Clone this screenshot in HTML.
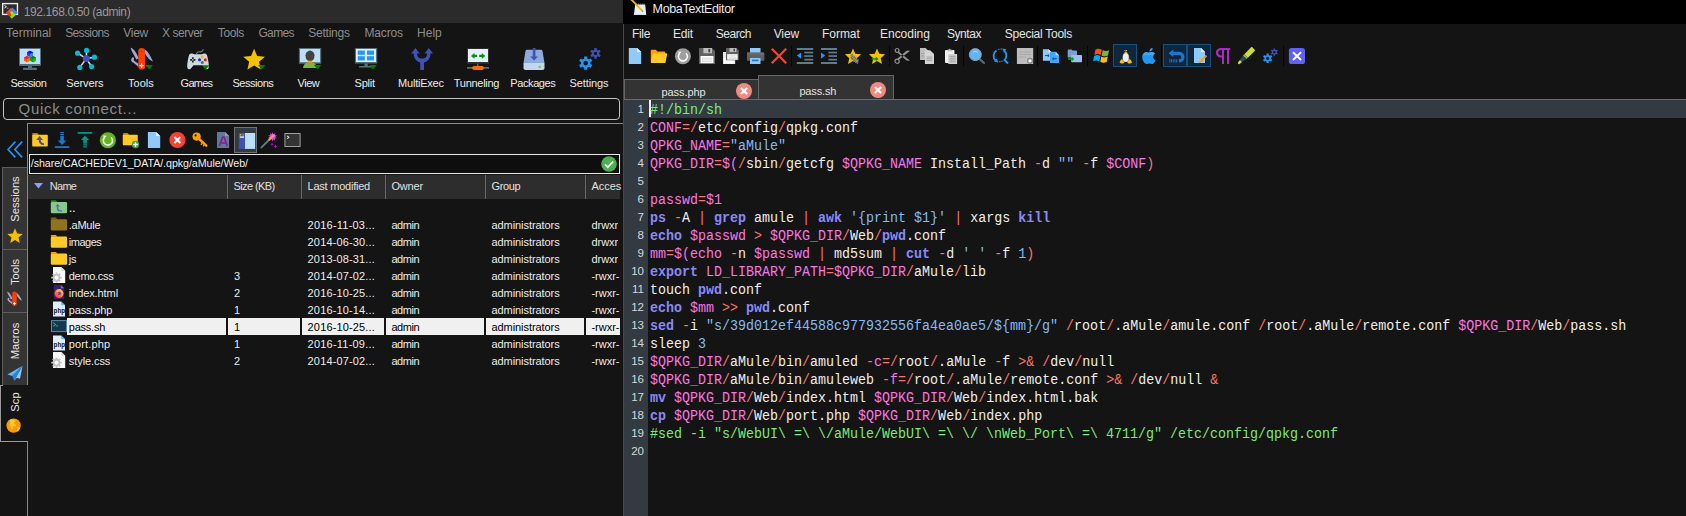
<!DOCTYPE html>
<html><head><meta charset="utf-8"><title>MobaXterm</title><style>
html,body{margin:0;padding:0;background:#141414;}
body{width:1686px;height:516px;position:relative;overflow:hidden;font-family:"Liberation Sans",sans-serif;}
body>div,body>svg{position:absolute;}
.t{white-space:pre;}
.vt{white-space:pre;font-size:11.2px;line-height:14px;height:14px;width:80px;text-align:center;transform:rotate(-90deg);transform-origin:50% 50%;}
.cl{left:650.4px;height:18px;line-height:18px;white-space:pre;font-family:"Liberation Mono",monospace;font-size:14px;transform:scaleX(0.95238);transform-origin:0 0;color:#e8e8e8;}
.p{color:#f878e4}.o{color:#f8766a}.k{color:#8a8af6;font-weight:bold}.s{color:#84bbf6}.w{color:#efefef}.g{color:#7aea7a}
</style></head><body>
<div style="left:0px;top:0px;width:623px;height:23px;background:#2b2b2b;"></div>
<div style="left:623px;top:24px;width:1px;height:492px;background:#484848;"></div>
<svg style="left:2px;top:3px" width="18" height="18" viewBox="0 0 18 18" overflow="visible"><rect x="0.65" y="0.6" width="14.8" height="10.8" fill="#2b2b2b" stroke="#ececec" stroke-width="1.4"/>
<path d="M2.4 2.4l2 1.3-2 1.3" fill="none" stroke="#fff" stroke-width="0.9"/><path d="M4.8 5.2h1.6" stroke="#ddd" stroke-width="0.7"/>
<g transform="translate(9.85 9.8) rotate(45)">
<rect x="-3.4" y="-4.2" width="7.6" height="2.8" fill="#3f86f8"/>
<rect x="-4.2" y="-2.6" width="2.8" height="6.8" fill="#f04a4a"/><rect x="-4.2" y="1.4" width="5.6" height="2.8" fill="#e53935"/>
<rect x="-1.4" y="-1.4" width="5.6" height="2.8" fill="#a2ec00"/><rect x="1.4" y="-1.4" width="2.8" height="5.6" fill="#8fdc00"/>
</g></svg>
<svg style="left:16px;top:47px" width="24" height="24" viewBox="0 0 24 24" overflow="visible"><rect x="3" y="0.9" width="22" height="18" rx="0.8" fill="#546e7a"/>
<rect x="4" y="2" width="20" height="15" fill="#bbdefb"/>
<rect x="12" y="19" width="4" height="2.2" fill="#546e7a"/><rect x="7" y="20.8" width="14" height="2.2" rx="0.8" fill="#546e7a"/>
<g transform="translate(2 0)"><path d="M12 3.8l3 1.5v3.2l-3 1.6-3-1.6V5.3z" fill="#1a47f0"/><path d="M12 6.8l3-1.5v3.2l-3 1.6z" fill="#3d7bff"/><path d="M12 3.8l3 1.5-3 1.5-3-1.5z" fill="#0a0af0"/>
<path d="M9 9l3 1.5v3.2l-3 1.6-3-1.6v-3.2z" fill="#f4511e"/><path d="M9 9l3 1.5-3 1.4-3-1.4z" fill="#ff1a1a"/><path d="M9 11.9l3-1.4v3.2l-3 1.6z" fill="#ff7a00"/>
<path d="M15 9l3 1.5v3.2l-3 1.6-3-1.6v-3.2z" fill="#0a9d12"/><path d="M15 9l3 1.5-3 1.4-3-1.4z" fill="#087f10"/><path d="M15 11.9l3-1.4v3.2l-3 1.6z" fill="#10c020"/></g></svg>
<svg style="left:73px;top:47px" width="24" height="24" viewBox="0 0 24 24" overflow="visible"><g stroke="#e0e0e0" stroke-width="1.5"><path d="M13.3 11.6L13.6 3.4M13.3 11.6L4.6 6.2M13.3 11.6L21.4 10.2M13.3 11.6L6.8 20.4M13.3 11.6L18.6 19.5"/></g>
<g fill="#00bcd4"><circle cx="13.6" cy="3.4" r="2.6"/><circle cx="4.6" cy="6.2" r="2.6"/><circle cx="21.4" cy="10.2" r="2.6"/><circle cx="6.8" cy="20.4" r="2.6"/><circle cx="18.6" cy="19.5" r="2.6"/></g>
<circle cx="13.3" cy="11.6" r="3.5" fill="#3f51b5"/></svg>
<svg style="left:129px;top:47px" width="24" height="24" viewBox="0 0 24 24" overflow="visible"><path d="M1.6 0.8c2.8 0.6 5.4 4.2 8.2 10.4l-2.4 1.4C5.2 8.4 2.6 4.8 1.6 0.8z" fill="#9fa8da"/>
<path d="M16 2.6c3 2.2 5.6 6.8 8 11.8-3-0.4-6.6-4.8-8.8-9.6z" fill="#9fa8da"/>
<path d="M3.4 10.2c-2 2.2-1.4 4.4 0.8 5.4l5.2 4.2-0.2-3.2-3.4-2.4c-1.2-0.8-1.4-2-0.6-3.4z" fill="#9fa8da"/>
<rect x="9.3" y="0.9" width="6.8" height="21.7" rx="3.4" fill="#ff3d00"/>
<circle cx="12.7" cy="4.6" r="0.9" fill="#dd2c00"/>
<path d="M12.6 16.6v4.2M10.5 18.7h4.2" stroke="#fff" stroke-width="1.3"/>
<path d="M16.4 18h7.5l-3.75 4.6z" fill="#008000"/></svg>
<svg style="left:186px;top:47px" width="24" height="24" viewBox="0 0 24 24" overflow="visible"><path d="M10.5 7.2c0.3-2 1.2-2.6 2.8-2.4 2 0.3 3.5-0.3 4-2.6" fill="none" stroke="#607d8b" stroke-width="1.1"/>
<path d="M5.5 6.6c-2 0-2.6 1.4-3.2 4.4-0.8 4-1.6 8-0.8 10.2 0.6 1.5 2.2 1.5 3.4 0.2l2.6-3.2h9l2.6 3.2c1.2 1.3 2.8 1.3 3.4-0.2 0.8-2.2 0-6.2-0.8-10.2-0.6-3-1.2-4.4-3.2-4.4-1.2 0-1.6 0.6-2.6 0.6h-7.8c-1 0-1.4-0.6-2.6-0.6z" fill="#cfd8dc"/>
<path d="M6.8 10.2v5.2M4.2 12.8h5.2" stroke="#212121" stroke-width="1.7"/>
<rect x="6.1" y="12.1" width="1.4" height="1.4" fill="#cfd8dc"/>
<circle cx="16.2" cy="9.8" r="1.5" fill="#f2b600"/><circle cx="13.5" cy="12.8" r="1.5" fill="#0026ff"/><circle cx="19.3" cy="12.8" r="1.5" fill="#ff0d0d"/><circle cx="16.3" cy="15.4" r="1.5" fill="#0a9d12"/>
<path d="M16 18.3h7.4l-3.7 4.5z" fill="#008000"/></svg>
<svg style="left:242px;top:47px" width="24" height="24" viewBox="0 0 24 24" overflow="visible"><polygon points="12.10,1.80 15.16,8.99 22.94,9.68 17.05,14.81 18.80,22.42 12.10,18.40 5.40,22.42 7.15,14.81 1.26,9.68 9.04,8.99" fill="#f2c100"/><path d="M16 18h7.4l-3.7 4.5z" fill="#008000"/></svg>
<svg style="left:296px;top:47px" width="24" height="24" viewBox="0 0 24 24" overflow="visible"><rect x="2.9" y="0.9" width="22.3" height="15.8" rx="0.6" fill="#546e7a" transform="translate(0 0)"/>
<rect x="4" y="2" width="20" height="13.2" fill="#bbdefb"/>
<ellipse cx="14" cy="9" rx="4.6" ry="5.4" fill="#424242"/>
<rect x="9.1" y="9.2" width="0.8" height="1.6" fill="#ffb74d"/><rect x="18.1" y="9.2" width="0.8" height="1.6" fill="#ffb74d"/>
<rect x="12" y="13.6" width="4" height="2.4" fill="#ff9800"/>
<path d="M7 21c0.4-3.6 2.4-5.2 5-5.6 1.2 1 2.8 1 4 0 2.6 0.4 4.6 2 5 5.6z" fill="#7cb342"/>
<path d="M17.8 18h7.4l-3.7 4.5z" fill="#008000"/></svg>
<svg style="left:353px;top:47px" width="24" height="24" viewBox="0 0 24 24" overflow="visible"><rect x="1.9" y="0.9" width="22.3" height="15.6" rx="0.6" fill="#546e7a"/>
<rect x="3" y="2" width="20" height="13" fill="#dcebf7"/>
<g fill="#2196f3"><rect x="4.8" y="3.6" width="7" height="4.2"/><rect x="14" y="3.6" width="7" height="4.2"/><rect x="4.8" y="9.2" width="7" height="4.2"/><rect x="14" y="9.2" width="7" height="4.2"/></g>
<rect x="11.4" y="16.5" width="3.4" height="2.6" fill="#546e7a"/><rect x="6" y="19" width="13" height="1.6" rx="0.6" fill="#546e7a"/>
<path d="M16.2 18h7.6l-3.8 4.6z" fill="#008000"/></svg>
<svg style="left:409px;top:47px" width="24" height="24" viewBox="0 0 24 24" overflow="visible"><path d="M11.2 23V15.4C7 14.4 4.75 11 4.75 6.5H2.1L6.4 0.9l4.3 5.6H8.05c0 3 1.75 5.1 5.05 5.1s5.05-2.1 5.05-5.1H15.5l4.3-5.6 4.3 5.6h-2.65c0 4.5-2.25 7.9-6.45 8.9V23z" fill="#3f51b5"/></svg>
<svg style="left:464px;top:47px" width="24" height="24" viewBox="0 0 24 24" overflow="visible"><rect x="3" y="1.2" width="22" height="15.5" fill="#333"/>
<rect x="4" y="2" width="20" height="13" fill="#e3f2fd"/>
<path d="M6.9 8.9l3.6-2.8v1.7h2.6v2.2h-2.6v1.7zM21.4 8.9l-3.6-2.8v1.7h-2.6v2.2h2.6v1.7z" fill="#009900"/>
<rect x="12.9" y="16.7" width="1.6" height="2.4" fill="#546e7a"/>
<rect x="3" y="20" width="22" height="1.7" fill="#546e7a"/>
<rect x="8.3" y="18.9" width="11.5" height="4" rx="1.6" fill="#ff6d00"/></svg>
<svg style="left:522px;top:47px" width="24" height="24" viewBox="0 0 24 24" overflow="visible"><path d="M5 2.8h14c0.8 0 1.3 0.4 1.5 1.2l2 12H1.5l2-12c0.2-0.8 0.7-1.2 1.5-1.2z" fill="#8eaadb"/>
<path d="M1.5 16h21v5c0 1.2-0.8 2-2 2h-17c-1.2 0-2-0.8-2-2z" fill="#c5d5f0"/>
<rect x="16.6" y="18.8" width="2.2" height="2.2" rx="0.5" fill="#64dd17"/>
<path d="M10.8 0.9h2.6v8.6h2.6l-3.9 3.9-3.9-3.9h2.6z" fill="#3f51b5"/></svg>
<svg style="left:576px;top:47px" width="24" height="24" viewBox="0 0 24 24" overflow="visible"><path d="M8.12 9.38 L11.28 9.38 L11.18 11.53 L12.91 12.53 L14.73 11.38 L16.31 14.11 L14.40 15.10 L14.40 17.10 L16.31 18.09 L14.73 20.82 L12.91 19.67 L11.18 20.67 L11.28 22.82 L8.12 22.82 L8.22 20.67 L6.49 19.67 L4.67 20.82 L3.09 18.09 L5.00 17.10 L5.00 15.10 L3.09 14.11 L4.67 11.38 L6.49 12.53 L8.22 11.53Z M7.40 16.10 a2.3 2.3 0 1 0 4.6 0 a2.3 2.3 0 1 0 -4.6 0Z" fill="#2196f3" fill-rule="evenodd"/><path d="M18.24 1.05 L20.76 1.05 L20.67 2.79 L22.04 3.58 L23.51 2.63 L24.77 4.81 L23.22 5.61 L23.22 7.19 L24.77 7.99 L23.51 10.17 L22.04 9.22 L20.67 10.01 L20.76 11.75 L18.24 11.75 L18.33 10.01 L16.96 9.22 L15.49 10.17 L14.23 7.99 L15.78 7.19 L15.78 5.61 L14.23 4.81 L15.49 2.63 L16.96 3.58 L18.33 2.79Z M17.80 6.40 a1.7 1.7 0 1 0 3.4 0 a1.7 1.7 0 1 0 -3.4 0Z" fill="#3f51b5" fill-rule="evenodd"/></svg>
<div style="left:3px;top:98px;width:617px;height:22px;border:1px solid #c4c4c4;border-radius:4px;box-sizing:border-box;"></div>
<svg style="left:7px;top:141px" width="16" height="17" viewBox="0 0 16 17" overflow="visible"><path d="M8.4 0.6L1 8.5l7.4 7.9M15.2 0.6L7.8 8.5l7.4 7.9" fill="none" stroke="#2196f3" stroke-width="1.6"/></svg>
<div style="left:27px;top:123px;width:596px;height:1px;background:#8a8a8a;"></div>
<div style="left:27px;top:123px;width:1px;height:393px;background:#8a8a8a;"></div>
<div style="left:2px;top:167px;width:25px;height:83px;background:#343434;border:1px solid #5e5e5e;border-right:none;box-sizing:border-box;"></div>
<div style="left:2px;top:249px;width:25px;height:64px;background:#343434;border:1px solid #5e5e5e;border-right:none;box-sizing:border-box;"></div>
<div style="left:2px;top:312px;width:25px;height:74px;background:#343434;border:1px solid #5e5e5e;border-right:none;box-sizing:border-box;"></div>
<div style="left:0px;top:385px;width:28px;height:57px;background:#141414;border-left:1px solid #9a9a9a;border-bottom:1px solid #9a9a9a;box-sizing:border-box;"></div>
<div style="left:0px;top:385px;width:3px;height:1px;background:#9a9a9a;"></div>
<div class="vt" style="left:-25px;top:192.2px;color:#e6e6e6">Sessions</div>
<div class="vt" style="left:-25px;top:264.7px;color:#e6e6e6">Tools</div>
<div class="vt" style="left:-25px;top:333.5px;color:#e6e6e6">Macros</div>
<div class="vt" style="left:-25px;top:394.5px;color:#e6e6e6">Scp</div>
<svg style="left:7px;top:227.6px" width="16" height="16" viewBox="0 0 16 16" overflow="visible"><polygon points="8.00,0.30 10.17,5.41 15.70,5.90 11.52,9.54 12.76,14.95 8.00,12.10 3.24,14.95 4.48,9.54 0.30,5.90 5.83,5.41" fill="#f2c100"/></svg>
<svg style="left:6px;top:291px" width="16" height="16" viewBox="0 0 24 24" overflow="visible"><path d="M1.6 0.8c2.8 0.6 5.4 4.2 8.2 10.4l-2.4 1.4C5.2 8.4 2.6 4.8 1.6 0.8z" fill="#9fa8da"/>
<path d="M16 2.6c3 2.2 5.6 6.8 8 11.8-3-0.4-6.6-4.8-8.8-9.6z" fill="#9fa8da"/>
<path d="M3.4 10.2c-2 2.2-1.4 4.4 0.8 5.4l5.2 4.2-0.2-3.2-3.4-2.4c-1.2-0.8-1.4-2-0.6-3.4z" fill="#9fa8da"/>
<rect x="9.3" y="0.9" width="6.8" height="21.7" rx="3.4" fill="#ff3d00"/>
<circle cx="12.7" cy="4.6" r="0.9" fill="#dd2c00"/>
<path d="M12.6 16.6v4.2M10.5 18.7h4.2" stroke="#fff" stroke-width="1.3"/></svg>
<svg style="left:7px;top:364.6px" width="16" height="16.6" viewBox="0 0 16 16" overflow="visible"><path d="M15.6 0.4L0.4 9.2l5 1.5z" fill="#64b5f6"/><path d="M15.6 0.4L5.4 10.7l1.8 5z" fill="#1e88e5"/><path d="M15.6 0.4L7.2 15.7l2.6-3.2 3.2 1z" fill="#90caf9"/></svg>
<svg style="left:6.4px;top:418.3px" width="15.2" height="15.2" viewBox="0 0 16 16" overflow="visible"><circle cx="8" cy="8" r="7.6" fill="#ff9800"/>
<path d="M5 1.2c1.5 0.5 3 0.2 4.5 0.6 1 1.4-0.5 2.2-1.5 3 0.5 1.2 2 1.2 2.5 2.4 0.3 1.2-1 2-2.2 1.6-1.2 0.6-0.6 2.4-1.6 3.4-1 0.6-1.4-0.8-1.4-1.8 0-1.2-1.5-1.8-1.8-3 0.2-1.2 1.5-1.4 1.2-2.6C4.2 3.6 3.8 2 5 1.2z" fill="#ffca28"/>
<path d="M11.5 9.5c1.2-0.3 2.5 0.2 3.2 1.2-0.5 1.5-1.5 2.6-2.8 3.4-0.6-1.4 0.2-2.6-0.4-4.6z" fill="#ffca28"/></svg>
<div style="left:234px;top:127px;width:23px;height:26px;background:#343a42;border:1px solid #707070;box-sizing:border-box;"></div>
<svg style="left:32px;top:132px" width="17" height="17" viewBox="0 0 17 17" overflow="visible"><g transform="translate(-0.4 0.6)"><path d="M0.6 1.6c0-0.6 0.4-1 1-1h4.2l1.4 1.6H1.6z" fill="#ffa000"/><path d="M0.6 2.2h14.6c0.6 0 1 0.4 1 1v9.8c0 0.6-0.4 1-1 1H1.6c-0.6 0-1-0.4-1-1z" fill="#ffca28"/><path d="M4.6 7.4l3.4-4 3.4 4H9.2c0 2 1 3.2 3.2 3.2v1.9c-3.6 0-5.2-1.9-5.2-5.1z" fill="#3f51b5"/></g></svg>
<svg style="left:53.9px;top:132px" width="17" height="17" viewBox="0 0 17 17" overflow="visible"><g fill="#1976d2"><rect x="6.3" y="0" width="3.6" height="1.3"/><rect x="6.3" y="2" width="3.6" height="1.3"/><rect x="6.3" y="4" width="3.6" height="5"/>
<path d="M3.8 8.4h8.6l-4.3 4.6z"/><rect x="0.8" y="14.2" width="14.6" height="1.8"/></g></svg>
<svg style="left:77px;top:132px" width="17" height="17" viewBox="0 0 17 17" overflow="visible"><g fill="#009688"><rect x="0.6" y="0" width="14.6" height="1.8"/><path d="M8 3.5l4.2 4.6H3.8z"/><rect x="6.2" y="8" width="3.6" height="3.6"/><rect x="6.2" y="12.2" width="3.6" height="1.3"/><rect x="6.2" y="14.2" width="3.6" height="1.3"/></g></svg>
<svg style="left:100px;top:132px" width="17" height="17" viewBox="0 0 17 17" overflow="visible"><circle cx="7.9" cy="8.25" r="8.1" fill="#64b41f"/>
<path d="M4.7 5.2a4.6 4.6 0 1 0 6.4 0" fill="none" stroke="#fff" stroke-width="1.5"/>
<path d="M3.2 3.4l3.4 0.4-2.6 2.6z" fill="#fff"/></svg>
<svg style="left:122px;top:132px" width="17" height="17" viewBox="0 0 17 17" overflow="visible"><g transform="translate(0.2 0.7) scale(0.96 0.9)"><path d="M0.6 1.6c0-0.6 0.4-1 1-1h4.2l1.4 1.6H1.6z" fill="#ffa000"/><path d="M0.6 2.2h14.6c0.6 0 1 0.4 1 1v9.8c0 0.6-0.4 1-1 1H1.6c-0.6 0-1-0.4-1-1z" fill="#ffca28"/></g><circle cx="13.5" cy="12.5" r="3.7" fill="#43a047"/><path d="M13.5 10.2v4.6M11.2 12.5h4.6" stroke="#fff" stroke-width="1.4"/></svg>
<svg style="left:145px;top:132px" width="17" height="17" viewBox="0 0 17 17" overflow="visible"><path d="M2.9 0h8.2l4.1 4.1V15.9H2.9z" fill="#90caf9"/><path d="M11.1 0l4.1 4.1h-4.1z" fill="#e3f2fd"/></svg>
<svg style="left:168.5px;top:132px" width="17" height="17" viewBox="0 0 17 17" overflow="visible"><circle cx="8.4" cy="8" r="8.1" fill="#f44336"/><path d="M5.4 5l6 6M11.4 5l-6 6" stroke="#fff" stroke-width="2.1"/></svg>
<svg style="left:191.9px;top:132px" width="17" height="17" viewBox="0 0 17 17" overflow="visible"><path d="M6 6l8.2 7.6" stroke="#ffa000" stroke-width="2.6" stroke-linecap="round"/>
<path d="M10 11.6l-1.2 1.2M12 13.2l-1 1" stroke="#ffa000" stroke-width="1.4"/>
<circle cx="4.6" cy="4.6" r="4.1" fill="#ffa000"/><circle cx="3.6" cy="3.4" r="1.1" fill="#141414"/></svg>
<svg style="left:214px;top:132px" width="17" height="17" viewBox="0 0 17 17" overflow="visible"><path d="M3 0h8l4.1 4.1V15.9H3z" fill="#5c7a99"/><path d="M11 0l4.1 4.1H11z" fill="#9e9e9e"/><path d="M5.4 14L8.6 5h1.4L13.2 14M6.6 11h5.4" fill="none" stroke="#8e1a8e" stroke-width="1.7"/></svg>
<svg style="left:238px;top:132px" width="17" height="17" viewBox="0 0 17 17" overflow="visible"><rect x="0.9" y="1" width="6.1" height="15.9" fill="#3f51b5"/><rect x="7" y="1" width="10.1" height="15.9" fill="#bbdefb"/><rect x="1.8" y="2.2" width="1.3" height="1.3" fill="#ffd600"/><rect x="4.6" y="2.2" width="1.3" height="1.3" fill="#76c043"/><rect x="1.8" y="4.2" width="4.2" height="1.8" fill="#c5cae9"/></svg>
<svg style="left:259.7px;top:132px" width="17" height="17" viewBox="0 0 17 17" overflow="visible"><path d="M1.3 15.6L9.4 7.5" stroke="#607d8b" stroke-width="1.8" stroke-linecap="round"/>
<polygon points="12.6,0 13.3,2.4 15.3,0.9 14.8,3.3 17,3.5 15.2,4.9 17,6.2 14.7,6.3 15.2,8.6 13.3,7.2 12.4,9.4 11.7,7.1 9.7,8.4 10.3,6.1 8,6 9.9,4.7 8.1,3.2 10.4,3.2 9.9,0.9 11.8,2.3" fill="#e040fb"/>
<path d="M9.4 7.5l3.8-3.8" stroke="#ffa000" stroke-width="2.4" stroke-linecap="round"/>
<circle cx="13.2" cy="3.7" r="1.3" fill="#f48fb1"/>
<path d="M12 10.6l0.5 1.2 1.2 0.5-1.2 0.5-0.5 1.2-0.5-1.2-1.2-0.5 1.2-0.5zM15.5 12.4l0.6 1.5 1.5 0.6-1.5 0.6-0.6 1.5-0.6-1.5-1.5-0.6 1.5-0.6z" fill="#d500f9"/></svg>
<svg style="left:283.6px;top:132px" width="17" height="17" viewBox="0 0 17 17" overflow="visible"><rect x="0.9" y="1.5" width="15.2" height="13" fill="#333" stroke="#9e9e9e" stroke-width="1"/><path d="M3 4l2.2 1.3L3 6.6" fill="none" stroke="#fff" stroke-width="0.9"/></svg>
<div style="left:29px;top:154px;width:591px;height:20px;background:#0e0e0e;border:1px solid #e8e8e8;box-sizing:border-box;"></div>
<svg style="left:601px;top:156px" width="16" height="16" viewBox="0 0 16 16" overflow="visible"><circle cx="8" cy="8" r="7.8" fill="#4caf50"/><path d="M4 8.3l2.8 2.8 5.4-5.6" fill="none" stroke="#fff" stroke-width="1.8"/></svg>
<div style="left:28px;top:175px;width:592px;height:24px;background:#2d2d2d;"></div>
<div style="left:227px;top:175px;width:1px;height:24px;background:#686868;"></div>
<div style="left:301px;top:175px;width:1px;height:24px;background:#686868;"></div>
<div style="left:385px;top:175px;width:1px;height:24px;background:#686868;"></div>
<div style="left:485px;top:175px;width:1px;height:24px;background:#686868;"></div>
<div style="left:585px;top:175px;width:1px;height:24px;background:#686868;"></div>
<svg style="left:34px;top:183px" width="9" height="6" viewBox="0 0 9 6" overflow="visible"><path d="M0 0h9L4.5 5.5z" fill="#8c9eff"/></svg>
<svg style="left:51px;top:199px" width="16" height="16" viewBox="0 0 16 16" overflow="visible"><g transform="translate(-0.2 1.3)"><path d="M0 1.2c0-0.7 0.5-1.2 1.2-1.2h3.9l1.4 1.8H0z" fill="#00a000"/><rect x="0" y="1.7" width="16.3" height="11.2" rx="1.3" fill="#88c98a"/></g><path d="M6.6 4.8L8.95 7.5H7.4V9.6C7.4 10.6 8 11 9 11H10.9V12.5H8.8C6.8 12.5 5.8 11.5 5.8 9.6V7.5H4.25z" fill="#5c6bc0"/></svg>
<svg style="left:51px;top:216px" width="16" height="16" viewBox="0 0 16 16" overflow="visible"><g transform="translate(-0.2 1.6)" opacity="0.52"><path d="M0 1.2c0-0.7 0.5-1.2 1.2-1.2h3.9l1.4 1.8H0z" fill="#ffa000"/><rect x="0" y="1.7" width="16.3" height="11.2" rx="1.3" fill="#ffca28"/></g></svg>
<svg style="left:51px;top:233px" width="16" height="16" viewBox="0 0 16 16" overflow="visible"><g transform="translate(-0.2 1.9)"><path d="M0 1.2c0-0.7 0.5-1.2 1.2-1.2h3.9l1.4 1.8H0z" fill="#ffa000"/><rect x="0" y="1.7" width="16.3" height="11.2" rx="1.3" fill="#ffca28"/></g></svg>
<svg style="left:51px;top:250px" width="16" height="16" viewBox="0 0 16 16" overflow="visible"><g transform="translate(-0.2 1.9)"><path d="M0 1.2c0-0.7 0.5-1.2 1.2-1.2h3.9l1.4 1.8H0z" fill="#ffa000"/><rect x="0" y="1.7" width="16.3" height="11.2" rx="1.3" fill="#ffca28"/></g></svg>
<svg style="left:51px;top:267px" width="16" height="16" viewBox="0 0 16 16" overflow="visible"><path d="M2 0h8.4l3.8 3.8V16H2z" fill="#fafafa"/><path d="M10.4 0l3.8 3.8h-3.8z" fill="#d6d6d6"/><path d="M4.59 5.38 L6.41 5.38 L6.41 6.81 L7.54 7.27 L8.55 6.26 L9.84 7.55 L8.83 8.56 L9.29 9.69 L10.72 9.69 L10.72 11.51 L9.29 11.51 L8.83 12.64 L9.84 13.65 L8.55 14.94 L7.54 13.93 L6.41 14.39 L6.41 15.82 L4.59 15.82 L4.59 14.39 L3.46 13.93 L2.45 14.94 L1.16 13.65 L2.17 12.64 L1.71 11.51 L0.28 11.51 L0.28 9.69 L1.71 9.69 L2.17 8.56 L1.16 7.55 L2.45 6.26 L3.46 7.27 L4.59 6.81Z M3.60 10.60 a1.9 1.9 0 1 0 3.8 0 a1.9 1.9 0 1 0 -3.8 0Z" fill="#c4c4c4" fill-rule="evenodd"/><circle cx="5.5" cy="10.6" r="1.9" fill="#fff"/></svg>
<svg style="left:51px;top:284px" width="16" height="16" viewBox="0 0 16 16" overflow="visible"><defs><linearGradient id="ffg" x1="0.9" y1="0.1" x2="0.15" y2="0.9"><stop offset="0" stop-color="#ffd83a"/><stop offset="0.5" stop-color="#ff8a16"/><stop offset="1" stop-color="#ff3647"/></linearGradient></defs><path d="M2.9 1h7l3.3 3.3V15H2.9z" fill="#3b1d6e"/><path d="M9.9 1l3.3 3.3H9.9z" fill="#8b5cf6"/><circle cx="8" cy="9.6" r="4.5" fill="url(#ffg)"/><path d="M5.2 6.4c0.6-0.2 1.2 0.2 1.6 0.8 0.6-1 1.6-1.6 2.6-2.4-0.2 1 0.4 1.6 1.2 2.2-1.4-0.4-3 0-3.8 1.2-0.8-0.4-1.4-1-1.6-1.8z" fill="#ffbd2e"/><circle cx="8.3" cy="9.4" r="1.7" fill="#6b2fd6"/><path d="M6 9.2c0.8-0.6 1.8-0.4 2.4 0.4-1 0-1.6 0.6-1.6 1.4-0.6-0.4-0.9-1-0.8-1.8z" fill="#ff6a2b"/></svg>
<svg style="left:51px;top:301px" width="16" height="16" viewBox="0 0 16 16" overflow="visible"><path d="M2 0.5h8.2l3.8 3.8V15.4H2z" fill="#dfeefb"/><path d="M10.2 0.5l3.8 3.8h-3.8z" fill="#4fc3f7"/><text x="8.3" y="11.8" font-family="Liberation Sans" font-weight="bold" font-size="8" text-anchor="middle" fill="#111" textLength="11.4" lengthAdjust="spacingAndGlyphs">php</text></svg>
<div style="left:67px;top:318px;width:159px;height:17px;background:#f0f0f0;"></div>
<div style="left:228px;top:318px;width:72px;height:17px;background:#f0f0f0;"></div>
<div style="left:302px;top:318px;width:82px;height:17px;background:#f0f0f0;"></div>
<div style="left:386px;top:318px;width:98px;height:17px;background:#f0f0f0;"></div>
<div style="left:486px;top:318px;width:98px;height:17px;background:#f0f0f0;"></div>
<div style="left:586px;top:318px;width:34px;height:17px;background:#f0f0f0;"></div>
<svg style="left:51px;top:318px" width="16" height="16" viewBox="0 0 16 16" overflow="visible"><rect x="0.5" y="2.6" width="15" height="11" fill="#16384f" stroke="#5c8ab0" stroke-width="1"/><path d="M2.2 4.8l2.6 1.7-2.6 1.7" fill="none" stroke="#22d14a" stroke-width="1"/><path d="M5.2 7.9h1.8" stroke="#22d14a" stroke-width="0.9"/></svg>
<svg style="left:51px;top:335px" width="16" height="16" viewBox="0 0 16 16" overflow="visible"><path d="M2 0.5h8.2l3.8 3.8V15.4H2z" fill="#dfeefb"/><path d="M10.2 0.5l3.8 3.8h-3.8z" fill="#4fc3f7"/><text x="8.3" y="11.8" font-family="Liberation Sans" font-weight="bold" font-size="8" text-anchor="middle" fill="#111" textLength="11.4" lengthAdjust="spacingAndGlyphs">php</text></svg>
<svg style="left:51px;top:352px" width="16" height="16" viewBox="0 0 16 16" overflow="visible"><path d="M2 0h8.4l3.8 3.8V16H2z" fill="#fafafa"/><path d="M10.4 0l3.8 3.8h-3.8z" fill="#d6d6d6"/><path d="M4.59 5.38 L6.41 5.38 L6.41 6.81 L7.54 7.27 L8.55 6.26 L9.84 7.55 L8.83 8.56 L9.29 9.69 L10.72 9.69 L10.72 11.51 L9.29 11.51 L8.83 12.64 L9.84 13.65 L8.55 14.94 L7.54 13.93 L6.41 14.39 L6.41 15.82 L4.59 15.82 L4.59 14.39 L3.46 13.93 L2.45 14.94 L1.16 13.65 L2.17 12.64 L1.71 11.51 L0.28 11.51 L0.28 9.69 L1.71 9.69 L2.17 8.56 L1.16 7.55 L2.45 6.26 L3.46 7.27 L4.59 6.81Z M3.60 10.60 a1.9 1.9 0 1 0 3.8 0 a1.9 1.9 0 1 0 -3.8 0Z" fill="#c4c4c4" fill-rule="evenodd"/><circle cx="5.5" cy="10.6" r="1.9" fill="#fff"/></svg>
<div style="left:623px;top:0px;width:1063px;height:24px;background:#000;"></div>
<svg style="left:630px;top:0px" width="20" height="20" viewBox="0 0 20 20" overflow="visible"><path d="M5.2 4.4h10l1 10.5H3.9z" fill="#eceff4"/><path d="M3.9 14.3h12.3v0.6H3.9z" fill="#b8d4ee"/><path d="M6.5 3.4v1.2M8.5 3.4v1.2M10.5 3.4v1.2M12.5 3.4v1.2M14 3.4v1.2" stroke="#b0b0b0" stroke-width="0.6"/><path d="M1.4 -0.4L12.3 10.9" stroke="#f5b400" stroke-width="1.8"/><path d="M0.6 -1.2l1.2 1.2" stroke="#d9a08a" stroke-width="1.8"/><path d="M12.1 10.7l0.9 0.9" stroke="#8d6e63" stroke-width="1.2"/></svg>
<div style="left:1113px;top:44px;width:24px;height:23px;background:#10273b;border:1px solid #17507f;box-sizing:border-box;"></div>
<div style="left:1163px;top:44px;width:24px;height:23px;background:#10273b;border:1px solid #17507f;box-sizing:border-box;"></div>
<div style="left:1187px;top:44px;width:24px;height:23px;background:#10273b;border:1px solid #17507f;box-sizing:border-box;"></div>
<div style="left:791px;top:46px;width:1px;height:20px;background:#030303;"></div>
<div style="left:889px;top:46px;width:1px;height:20px;background:#030303;"></div>
<div style="left:963px;top:46px;width:1px;height:20px;background:#030303;"></div>
<div style="left:1037px;top:46px;width:1px;height:20px;background:#030303;"></div>
<div style="left:1087px;top:46px;width:1px;height:20px;background:#030303;"></div>
<div style="left:1161px;top:46px;width:1px;height:20px;background:#030303;"></div>
<div style="left:1283px;top:46px;width:1px;height:20px;background:#030303;"></div>
<svg style="left:628px;top:48px" width="16" height="16" viewBox="0 0 16 16" overflow="visible"><path d="M0.8 0h8.4l4 4V16H0.8z" fill="#90caf9"/><path d="M9.2 0l4 4h-4z" fill="#e3f2fd"/></svg>
<svg style="left:652px;top:48px" width="16" height="16" viewBox="0 0 16 16" overflow="visible"><path d="M-1.2 3c0-0.7 0.5-1.2 1.2-1.2h3.8l1.6 1.6h6.6c0.7 0 1.2 0.5 1.2 1.2V14c0 0.6-0.4 1-1 1H-0.2c-0.6 0-1-0.4-1-1z" fill="#ffa000"/><path d="M1.8 5.3H14c0.8 0 1.3 0.6 1.1 1.4l-1.6 7.5c-0.1 0.5-0.5 0.8-1 0.8H-0.2c-0.6 0-0.9-0.4-0.8-1l1.6-7.6c0.2-0.7 0.6-1.1 1.2-1.1z" fill="#ffca28"/></svg>
<svg style="left:676px;top:48px" width="16" height="16" viewBox="0 0 16 16" overflow="visible"><circle cx="6.9" cy="8.25" r="8" fill="#9e9e9e"/><path d="M3.8 5.2a4.5 4.5 0 1 0 6.2 0" fill="none" stroke="#fff" stroke-width="1.5"/><path d="M2.2 3.4l3.4 0.4-2.6 2.6z" fill="#fff"/></svg>
<svg style="left:700px;top:48px" width="16" height="16" viewBox="0 0 16 16" overflow="visible"><g transform="translate(-1 0)"><path d="M0 0h13l3 3v13H0z" fill="#616161"/><rect x="4.4" y="0" width="8.6" height="5.2" fill="#bdbdbd"/><rect x="9.4" y="0.9" width="1.8" height="3.4" fill="#424242"/><rect x="1.5" y="8" width="13" height="7.2" fill="#fff"/><path d="M3 10.2h10M3 12h10M3 13.8h10" stroke="#d0d0d0" stroke-width="0.9"/></g></svg>
<svg style="left:724px;top:48px" width="16" height="16" viewBox="0 0 16 16" overflow="visible"><g transform="translate(-1 3.9) scale(0.76)"><path d="M0 0h13l3 3v13H0z" fill="#e8e8e8"/><rect x="1.5" y="8" width="13" height="7.2" fill="#fff"/></g><g transform="translate(2 0) scale(0.8 0.77)"><path d="M0 0h13l3 3v13H0z" fill="#616161"/><rect x="4.4" y="0" width="8.6" height="5.2" fill="#bdbdbd"/><rect x="9.4" y="0.9" width="1.8" height="3.4" fill="#424242"/><rect x="1.5" y="8" width="13" height="7.2" fill="#fff"/><path d="M3 10.2h10M3 12h10M3 13.8h10" stroke="#d0d0d0" stroke-width="0.9"/></g></svg>
<svg style="left:748px;top:48px" width="16" height="16" viewBox="0 0 16 16" overflow="visible"><rect x="2" y="0" width="10.5" height="5" fill="#90caf9"/><path d="M-0.4 4.4h15.4c0.6 0 1 0.4 1 1v6.4c0 0.6-0.4 1-1 1H-0.4c-0.6 0-1-0.4-1-1V5.4c0-0.6 0.4-1 1-1z" fill="#616161" transform="translate(0.4 0)"/><rect x="-1" y="4.4" width="17" height="2" fill="#757575" opacity="0.6"/><rect x="13" y="5.6" width="1" height="1" fill="#4caf50"/><rect x="2" y="10" width="10.5" height="6" fill="#90caf9"/><rect x="4" y="11.6" width="6.5" height="1.6" fill="#1976d2"/></svg>
<svg style="left:772px;top:48px" width="16" height="16" viewBox="0 0 16 16" overflow="visible"><path d="M-0.2 0.8l14.4 14.4M14.2 0.8l-14.4 14.4" stroke="#f44336" stroke-width="2.3"/></svg>
<svg style="left:797px;top:48px" width="16" height="16" viewBox="0 0 16 16" overflow="visible"><g fill="#607d8b"><rect x="-0.2" y="0" width="16.4" height="2"/><rect x="7.2" y="3.7" width="9" height="1.7"/><rect x="7.2" y="7.2" width="9" height="1.7"/><rect x="7.2" y="10.8" width="9" height="1.7"/><rect x="-0.2" y="14" width="16.4" height="2"/></g><path d="M-0.1 7.6l4.2-3v6.2z" fill="#2196f3"/></svg>
<svg style="left:821px;top:48px" width="16" height="16" viewBox="0 0 16 16" overflow="visible"><g fill="#607d8b"><rect x="0" y="0" width="16" height="2"/><rect x="7.4" y="3.7" width="8.6" height="1.7"/><rect x="7.4" y="7.2" width="8.6" height="1.7"/><rect x="7.4" y="10.8" width="8.6" height="1.7"/><rect x="0" y="14" width="16" height="2"/></g><path d="M4.2 7.6l-4.2-3v6.2z" fill="#2196f3"/></svg>
<svg style="left:845px;top:48px" width="16" height="16" viewBox="0 0 16 16" overflow="visible"><polygon points="8.00,0.50 10.29,5.84 16.08,6.37 11.71,10.21 13.00,15.88 8.00,12.90 3.00,15.88 4.29,10.21 -0.08,6.37 5.71,5.84" fill="#f2c100"/><g transform="rotate(40 9.5 11)"><rect x="5.4" y="8.8" width="9" height="4.4" rx="1.5" fill="#3f51b5" opacity="0.85"/><path d="M7.2 8.8v4.4M9 8.8v4.4M10.8 8.8v4.4M12.6 8.8v4.4M5.4 11h9" stroke="#f2c100" stroke-width="0.5"/></g><path d="M6.2 8.4c-0.6-1.2 0.4-2.2 1.6-1.8" fill="none" stroke="#3f51b5" stroke-width="0.9"/></svg>
<svg style="left:869px;top:48px" width="16" height="16" viewBox="0 0 16 16" overflow="visible"><polygon points="8.00,0.50 10.29,5.84 16.08,6.37 11.71,10.21 13.00,15.88 8.00,12.90 3.00,15.88 4.29,10.21 -0.08,6.37 5.71,5.84" fill="#f2c100"/><path d="M2.7 10.2h4v-1.6l3 2.4-3 2.4v-1.6h-4z" fill="#0a9d12"/></svg>
<svg style="left:894px;top:48px" width="16" height="16" viewBox="0 0 16 16" overflow="visible"><circle cx="3.1" cy="2.4" r="1.9" fill="none" stroke="#929292" stroke-width="1.2"/><circle cx="3.1" cy="13.2" r="2.1" fill="none" stroke="#929292" stroke-width="1.2"/><path d="M4.6 3.4L15.8 12.4c-1.4 0.7-3 0.4-4.2-0.6L3.6 4.8zM4.6 12L15.8 3c-1.4-0.7-3-0.4-4.2 0.6L3.6 10.6z" fill="#929292"/></svg>
<svg style="left:918px;top:48px" width="16" height="16" viewBox="0 0 16 16" overflow="visible"><path d="M2 0h5.6l3.4 3.4V12H2z" fill="#bdbdbd"/><path d="M6.9 2.2h5.2l3.9 3.9V16H6.9z" fill="#d4d4d4"/><path d="M8.4 9h5.8M8.4 10.8h5.8M8.4 12.6h5.8" stroke="#9e9e9e" stroke-width="0.9"/><path d="M3 5.5h3M3 8h3" stroke="#9e9e9e" stroke-width="0.9"/></svg>
<svg style="left:942px;top:48px" width="16" height="16" viewBox="0 0 16 16" overflow="visible"><rect x="3" y="2" width="9.4" height="13" rx="0.8" fill="#f0f0f0"/><path d="M6 2.2l1.6-1.8 1.6 1.8z" fill="#bdbdbd"/><rect x="5" y="1.8" width="5.4" height="1.4" fill="#bdbdbd"/><rect x="6.2" y="6" width="8.9" height="10" fill="#d0d0d0"/><path d="M7.6 8.4h6M7.6 10.2h6M7.6 12h6M7.6 13.8h6" stroke="#9e9e9e" stroke-width="0.9"/></svg>
<svg style="left:968px;top:48px" width="16" height="16" viewBox="0 0 16 16" overflow="visible"><path d="M11 10.6l5 4.4" stroke="#546e7a" stroke-width="2.2" stroke-linecap="round"/><circle cx="7.3" cy="6.6" r="6" fill="#64b5f6" stroke="#9e9e9e" stroke-width="1"/><path d="M4.8 4.4c1.4-1.4 3.6-1.4 5 0" fill="none" stroke="#bbdefb" stroke-width="0.9"/></svg>
<svg style="left:992px;top:48px" width="16" height="16" viewBox="0 0 16 16" overflow="visible"><path d="M3.6 12.5A6.2 6.2 0 0 1 4.5 2.6" fill="none" stroke="#2196f3" stroke-width="1.8"/><path d="M12.4 3A6.2 6.2 0 0 1 12.5 12" fill="none" stroke="#2196f3" stroke-width="1.8"/><path d="M6.2 1.4h1.2M8.6 1.2h1.2M7.2 13.6h1.2M9.4 13.4h1.2" stroke="#2196f3" stroke-width="1.3"/><path d="M10.2 0.6l4.2 0.6-2.6 3.4z" fill="#2196f3"/><path d="M6.4 14.4l-4.2-0.6 2.6-3.4z" fill="#2196f3"/><path d="M12 11.5l4 4" stroke="#2196f3" stroke-width="2"/></svg>
<svg style="left:1016px;top:48px" width="16" height="16" viewBox="0 0 16 16" overflow="visible"><rect x="0.9" y="0" width="16.3" height="16" fill="#bdbdbd"/><path d="M3 4h12M3 6.5h12M3 9h7" stroke="#a8a8a8" stroke-width="1"/><circle cx="14" cy="12.8" r="2.4" fill="#fff" stroke="#8a8a8a" stroke-width="1.5"/></svg>
<svg style="left:1042px;top:48px" width="16" height="16" viewBox="0 0 16 16" overflow="visible"><path d="M0.9 1.2h5.6l3.4 3.4v8.2h-9z" fill="#90caf9"/><path d="M6.5 1.2l3.4 3.4H6.5z" fill="#e3f2fd"/><path d="M8 3.8h5.6l3.4 3.4V15H8z" fill="#42a5f5"/><path d="M13.6 3.8l3.4 3.4h-3.4z" fill="#bbdefb"/><path d="M3 7.6h3.6M5.8 6.4l1.4 1.2-1.4 1.2M14.6 10.8H11M11.8 9.6l-1.4 1.2 1.4 1.2" fill="none" stroke="#0d47a1" stroke-width="1"/></svg>
<svg style="left:1066px;top:48px" width="16" height="16" viewBox="0 0 16 16" overflow="visible"><path d="M1.7 2.4c0-0.5 0.4-0.8 0.8-0.8h3l1 1h3.7c0.5 0 0.8 0.4 0.8 0.8v6.2H1.7z" fill="#7b9fd4"/><path d="M5.1 7.7c0-0.5 0.4-0.8 0.8-0.8h9.3c0.5 0 0.8 0.4 0.8 0.8v5.8c0 0.5-0.4 0.8-0.8 0.8H5.9c-0.5 0-0.8-0.4-0.8-0.8z" fill="#9fbef0"/><path d="M2 10.2h3.6v-1.6l2.8 2.4-2.8 2.4v-1.6H2z" fill="#00b000"/></svg>
<svg style="left:1092px;top:48px" width="16" height="16" viewBox="0 0 16 16" overflow="visible"><g transform="skewX(-12) translate(3.2 0)"><path d="M0.6 1.5c2.2-1.2 4.2-1 6.4 0.2l0 5.4c-2.2-1.2-4.2-1.4-6.4-0.2z" fill="#f4511e"/><path d="M8 2c2.2 1.2 4.2 1.4 6.4 0.2l0 5.4c-2.2 1.2-4.2 1-6.4-0.2z" fill="#7cb342"/><path d="M0.6 7.9c2.2-1.2 4.2-1 6.4 0.2l0 5.4c-2.2-1.2-4.2-1.4-6.4-0.2z" fill="#03a9f4"/><path d="M8 8.4c2.2 1.2 4.2 1.4 6.4 0.2l0 5.4c-2.2 1.2-4.2 1-6.4-0.2z" fill="#ffc107"/></g></svg>
<svg style="left:1116px;top:48px" width="16" height="16" viewBox="0 0 16 16" overflow="visible"><ellipse cx="9.8" cy="3.2" rx="2.2" ry="2.8" fill="#212121"/><path d="M9.8 3c3 1 4.2 6 4.4 10.5H5.4C5.6 9 6.8 4 9.8 3z" fill="#37474f"/><ellipse cx="9.8" cy="9.5" rx="3" ry="4.6" fill="#eceff1"/><path d="M8.4 4.2l1.4-0.6 1.4 0.6-1.4 1.2z" fill="#ffc107"/><circle cx="9" cy="2.6" r="0.5" fill="#fff"/><circle cx="10.6" cy="2.6" r="0.5" fill="#fff"/><path d="M3.6 14.6c0.4-1.8 1.4-3.2 2.6-3.4l2.2 3c-0.6 1.6-3.6 2-4.8 0.4zM16 14.6c-0.4-1.8-1.4-3.2-2.6-3.4l-2.2 3c0.6 1.6 3.6 2 4.8 0.4z" fill="#ffc107"/></svg>
<svg style="left:1140px;top:48px" width="16" height="16" viewBox="0 0 16 16" overflow="visible"><path d="M9.4 3.4C9.4 1.6 10.6 0.2 12.6 0c0.2 1.8-1.2 3.4-3.2 3.4z" fill="#42a5f5"/><path d="M8.8 4.8c1-0.6 2.2-1 3.4-0.8 1.2 0.2 2.2 0.8 2.8 1.8-1.4 0.8-2 2-1.8 3.4 0.2 1.4 1 2.4 2.4 2.8-0.6 1.8-1.6 3.4-3 4-1 0.4-2-0.4-3.2-0.4s-2.2 0.8-3.2 0.4C3.8 15 2.2 11.8 2.2 9c0-3 2-5 4.2-5 1 0 1.8 0.4 2.4 0.8z" fill="#2196f3"/><path d="M2.4 8c2-1.4 9-1.4 11-0.2-0.2-1.2 0.4-2.2 1.6-2-1.2-2-4-2.4-6.2-1-2.4-1.4-5.6-0.6-6.4 3.2z" fill="#42a5f5"/></svg>
<svg style="left:1167.5px;top:48px" width="16" height="16" viewBox="0 0 16 16" overflow="visible"><path d="M0.5 5.3L5.3 1.4V3.8H11.15A5.35 5.35 0 0 1 11.15 14.5H10.9V11.3H11.15A2.15 2.15 0 0 0 11.15 7H5.3V9.1z" fill="#1976d2"/><path d="M1.4 12.85H10" stroke="#1976d2" stroke-width="3.3" stroke-dasharray="0.9 0.8"/></svg>
<svg style="left:1190px;top:48px" width="16" height="16" viewBox="0 0 16 16" overflow="visible"><path d="M4 0h7l4 4V15H4z" fill="#90caf9"/><path d="M11 0l4 4h-4z" fill="#e3f2fd"/><path d="M8.6 15.3l0.6-2 5.8-5.6 1.4 1.4-5.8 5.6z" fill="#ffa000"/><path d="M15 7.7l0.8-0.8 1.4 1.4-0.8 0.8z" fill="#ef9a9a"/></svg>
<svg style="left:1214px;top:48px" width="16" height="16" viewBox="0 0 16 16" overflow="visible"><path d="M7.6 0h8.6v2H15v14h-2V2h-3v14H8V9.6H7.2C4 9.6 2 7.6 2 4.8S4 0 7.6 0zM8 2H7.4C5.4 2 4.2 3 4.2 4.8S5.4 7.6 7.4 7.6H8z" fill="#a92cc0"/></svg>
<svg style="left:1238px;top:48px" width="16" height="16" viewBox="0 0 16 16" overflow="visible"><g transform="rotate(45 8 8)"><rect x="5.5" y="-2.6" width="5" height="10.6" rx="0.5" fill="#cddc39"/><rect x="5.5" y="8" width="5" height="1.9" fill="#8bc34a"/><path d="M5.5 9.9h5l-1 5.2H6.5z" fill="#37474f"/><path d="M6.6 15.1h2.8l-0.3 3c-0.1 0.6-0.5 0.9-1.1 0.9s-1-0.3-1.1-0.9z" fill="#cddc39"/></g></svg>
<svg style="left:1262px;top:48px" width="16" height="16" viewBox="0 0 24 24" overflow="visible"><path d="M6.83 8.39 L10.17 8.39 L10.05 10.74 L11.85 11.78 L13.82 10.50 L15.49 13.39 L13.39 14.46 L13.39 16.54 L15.49 17.61 L13.82 20.50 L11.85 19.22 L10.05 20.26 L10.17 22.61 L6.83 22.61 L6.95 20.26 L5.15 19.22 L3.18 20.50 L1.51 17.61 L3.61 16.54 L3.61 14.46 L1.51 13.39 L3.18 10.50 L5.15 11.78 L6.95 10.74Z M6.10 15.50 a2.4 2.4 0 1 0 4.8 0 a2.4 2.4 0 1 0 -4.8 0Z" fill="#2196f3" fill-rule="evenodd"/><path d="M17.22 0.75 L19.78 0.75 L19.67 2.59 L21.04 3.38 L22.58 2.37 L23.86 4.58 L22.22 5.41 L22.22 6.99 L23.86 7.82 L22.58 10.03 L21.04 9.02 L19.67 9.81 L19.78 11.65 L17.22 11.65 L17.33 9.81 L15.96 9.02 L14.42 10.03 L13.14 7.82 L14.78 6.99 L14.78 5.41 L13.14 4.58 L14.42 2.37 L15.96 3.38 L17.33 2.59Z M16.70 6.20 a1.8 1.8 0 1 0 3.6 0 a1.8 1.8 0 1 0 -3.6 0Z" fill="#3f51b5" fill-rule="evenodd"/></svg>
<svg style="left:1288px;top:48px" width="16" height="16" viewBox="0 0 16 16" overflow="visible"><rect x="0.9" y="0" width="16.1" height="16" rx="2.6" fill="#6060f5"/><path d="M5 4.2l8 7.8M13 4.2l-8 7.8" stroke="#fff" stroke-width="2"/></svg>
<div style="left:624px;top:79px;width:135px;height:20px;background:#333;border:1px solid #666;border-bottom:none;box-sizing:border-box;"></div>
<div style="left:758px;top:75px;width:136px;height:24px;background:#333;border:1px solid #666;border-bottom:none;box-sizing:border-box;"></div>
<svg style="left:736.1px;top:83.1px" width="16" height="16" viewBox="0 0 16 16" overflow="visible"><circle cx="8" cy="8" r="8" fill="#f38a80"/><path d="M4.9 4.9l6.2 6.2M11.1 4.9l-6.2 6.2" stroke="#fff" stroke-width="2.1"/></svg>
<svg style="left:870px;top:81.9px" width="16" height="16" viewBox="0 0 16 16" overflow="visible"><circle cx="8" cy="8" r="8" fill="#f38a80"/><path d="M4.9 4.9l6.2 6.2M11.1 4.9l-6.2 6.2" stroke="#fff" stroke-width="2.1"/></svg>
<div style="left:624px;top:99px;width:1062px;height:1px;background:#6c6c6c;"></div>
<div style="left:624px;top:100px;width:1062px;height:18px;background:#333a42;"></div>
<div style="left:624px;top:100px;width:24px;height:416px;background:#333a42;"></div>
<div style="left:649px;top:100px;width:2px;height:17px;background:#f4f4f4;"></div>
<div class="t" style="left:23.70px;top:4.84px;font-size:12px;line-height:14px;color:#9a9a9a;letter-spacing:-0.374px;">192.168.0.50 (admin)</div>
<div class="t" style="left:6.10px;top:25.84px;font-size:12px;line-height:14px;color:#8d8d8d;letter-spacing:-0.032px;">Terminal</div>
<div class="t" style="left:65.20px;top:25.84px;font-size:12px;line-height:14px;color:#8d8d8d;letter-spacing:-0.625px;">Sessions</div>
<div class="t" style="left:123.20px;top:25.84px;font-size:12px;line-height:14px;color:#8d8d8d;letter-spacing:-0.249px;">View</div>
<div class="t" style="left:162.10px;top:25.84px;font-size:12px;line-height:14px;color:#8d8d8d;letter-spacing:-0.486px;">X server</div>
<div class="t" style="left:217.80px;top:25.84px;font-size:12px;line-height:14px;color:#8d8d8d;letter-spacing:-0.383px;">Tools</div>
<div class="t" style="left:258.40px;top:25.84px;font-size:12px;line-height:14px;color:#8d8d8d;letter-spacing:-0.617px;">Games</div>
<div class="t" style="left:308.20px;top:25.84px;font-size:12px;line-height:14px;color:#8d8d8d;letter-spacing:-0.220px;">Settings</div>
<div class="t" style="left:364.40px;top:25.84px;font-size:12px;line-height:14px;color:#8d8d8d;letter-spacing:-0.141px;">Macros</div>
<div class="t" style="left:417.10px;top:25.84px;font-size:12px;line-height:14px;color:#8d8d8d;letter-spacing:-0.022px;">Help</div>
<div class="t" style="left:10.50px;top:76.89px;font-size:11px;line-height:13px;color:#ececec;letter-spacing:-0.477px;">Session</div>
<div class="t" style="left:66.30px;top:76.89px;font-size:11px;line-height:13px;color:#ececec;letter-spacing:-0.129px;">Servers</div>
<div class="t" style="left:128.10px;top:76.89px;font-size:11px;line-height:13px;color:#ececec;letter-spacing:-0.037px;">Tools</div>
<div class="t" style="left:180.60px;top:76.89px;font-size:11px;line-height:13px;color:#ececec;letter-spacing:-0.734px;">Games</div>
<div class="t" style="left:232.50px;top:76.89px;font-size:11px;line-height:13px;color:#ececec;letter-spacing:-0.468px;">Sessions</div>
<div class="t" style="left:297.50px;top:76.89px;font-size:11px;line-height:13px;color:#ececec;letter-spacing:-0.464px;">View</div>
<div class="t" style="left:354.60px;top:76.89px;font-size:11px;line-height:13px;color:#ececec;letter-spacing:-0.221px;">Split</div>
<div class="t" style="left:398.10px;top:76.89px;font-size:11px;line-height:13px;color:#ececec;letter-spacing:-0.221px;">MultiExec</div>
<div class="t" style="left:453.80px;top:76.89px;font-size:11px;line-height:13px;color:#ececec;letter-spacing:-0.290px;">Tunneling</div>
<div class="t" style="left:510.30px;top:76.89px;font-size:11px;line-height:13px;color:#ececec;letter-spacing:-0.402px;">Packages</div>
<div class="t" style="left:569.60px;top:76.89px;font-size:11px;line-height:13px;color:#ececec;letter-spacing:-0.131px;">Settings</div>
<div class="t" style="left:18.60px;top:99.60px;font-size:15px;line-height:18px;color:#8c8c8c;letter-spacing:0.690px;">Quick connect...</div>
<div class="t" style="left:30.80px;top:156.80px;font-size:10.67px;line-height:13px;color:#f0f0f0;letter-spacing:-0.051px;">/share/CACHEDEV1_DATA/.qpkg/aMule/Web/</div>
<div class="t" style="left:49.70px;top:179.69px;font-size:11px;line-height:13px;color:#e0e0e0;letter-spacing:-0.686px;">Name</div>
<div class="t" style="left:233.50px;top:179.69px;font-size:11px;line-height:13px;color:#e0e0e0;letter-spacing:-0.597px;">Size (KB)</div>
<div class="t" style="left:307.50px;top:179.69px;font-size:11px;line-height:13px;color:#e0e0e0;letter-spacing:-0.226px;">Last modified</div>
<div class="t" style="left:391.40px;top:179.69px;font-size:11px;line-height:13px;color:#e0e0e0;letter-spacing:-0.161px;">Owner</div>
<div class="t" style="left:491.40px;top:179.69px;font-size:11px;line-height:13px;color:#e0e0e0;letter-spacing:-0.316px;">Group</div>
<div class="t" style="left:591.40px;top:179.69px;font-size:11px;line-height:13px;color:#e0e0e0;">Acces</div>
<div class="t" style="left:68.80px;top:199.50px;font-size:13px;line-height:16px;color:#ececec;letter-spacing:-0.517px;">..</div>
<div class="t" style="left:68.80px;top:218.69px;font-size:11px;line-height:13px;color:#ececec;letter-spacing:-0.255px;">.aMule</div>
<div class="t" style="left:307.60px;top:218.69px;font-size:11px;line-height:13px;color:#ececec;letter-spacing:0.213px;">2016-11-03...</div>
<div class="t" style="left:391.40px;top:218.69px;font-size:11px;line-height:13px;color:#ececec;letter-spacing:-0.454px;">admin</div>
<div class="t" style="left:491.50px;top:218.69px;font-size:11px;line-height:13px;color:#ececec;letter-spacing:-0.070px;">administrators</div>
<div class="t" style="left:591.40px;top:218.69px;font-size:11px;line-height:13px;color:#ececec;max-width:29px;overflow:hidden;">drwxr</div>
<div class="t" style="left:68.80px;top:235.69px;font-size:11px;line-height:13px;color:#ececec;letter-spacing:-0.495px;">images</div>
<div class="t" style="left:307.60px;top:235.69px;font-size:11px;line-height:13px;color:#ececec;letter-spacing:0.151px;">2014-06-30...</div>
<div class="t" style="left:391.40px;top:235.69px;font-size:11px;line-height:13px;color:#ececec;letter-spacing:-0.454px;">admin</div>
<div class="t" style="left:491.50px;top:235.69px;font-size:11px;line-height:13px;color:#ececec;letter-spacing:-0.070px;">administrators</div>
<div class="t" style="left:591.40px;top:235.69px;font-size:11px;line-height:13px;color:#ececec;max-width:29px;overflow:hidden;">drwxr</div>
<div class="t" style="left:68.80px;top:252.69px;font-size:11px;line-height:13px;color:#ececec;letter-spacing:-0.127px;">js</div>
<div class="t" style="left:307.60px;top:252.69px;font-size:11px;line-height:13px;color:#ececec;letter-spacing:0.151px;">2013-08-31...</div>
<div class="t" style="left:391.40px;top:252.69px;font-size:11px;line-height:13px;color:#ececec;letter-spacing:-0.454px;">admin</div>
<div class="t" style="left:491.50px;top:252.69px;font-size:11px;line-height:13px;color:#ececec;letter-spacing:-0.070px;">administrators</div>
<div class="t" style="left:591.40px;top:252.69px;font-size:11px;line-height:13px;color:#ececec;max-width:29px;overflow:hidden;">drwxr</div>
<div class="t" style="left:68.80px;top:269.69px;font-size:11px;line-height:13px;color:#ececec;letter-spacing:-0.310px;">demo.css</div>
<div class="t" style="left:234.00px;top:269.69px;font-size:11px;line-height:13px;color:#ececec;">3</div>
<div class="t" style="left:307.60px;top:269.69px;font-size:11px;line-height:13px;color:#ececec;letter-spacing:0.151px;">2014-07-02...</div>
<div class="t" style="left:391.40px;top:269.69px;font-size:11px;line-height:13px;color:#ececec;letter-spacing:-0.454px;">admin</div>
<div class="t" style="left:491.50px;top:269.69px;font-size:11px;line-height:13px;color:#ececec;letter-spacing:-0.070px;">administrators</div>
<div class="t" style="left:591.40px;top:269.69px;font-size:11px;line-height:13px;color:#ececec;max-width:29px;overflow:hidden;">-rwxr-</div>
<div class="t" style="left:68.80px;top:286.69px;font-size:11px;line-height:13px;color:#ececec;letter-spacing:-0.094px;">index.html</div>
<div class="t" style="left:234.00px;top:286.69px;font-size:11px;line-height:13px;color:#ececec;">2</div>
<div class="t" style="left:307.60px;top:286.69px;font-size:11px;line-height:13px;color:#ececec;letter-spacing:0.151px;">2016-10-25...</div>
<div class="t" style="left:391.40px;top:286.69px;font-size:11px;line-height:13px;color:#ececec;letter-spacing:-0.454px;">admin</div>
<div class="t" style="left:491.50px;top:286.69px;font-size:11px;line-height:13px;color:#ececec;letter-spacing:-0.070px;">administrators</div>
<div class="t" style="left:591.40px;top:286.69px;font-size:11px;line-height:13px;color:#ececec;max-width:29px;overflow:hidden;">-rwxr-</div>
<div class="t" style="left:68.80px;top:303.69px;font-size:11px;line-height:13px;color:#ececec;letter-spacing:-0.145px;">pass.php</div>
<div class="t" style="left:234.00px;top:303.69px;font-size:11px;line-height:13px;color:#ececec;">1</div>
<div class="t" style="left:307.60px;top:303.69px;font-size:11px;line-height:13px;color:#ececec;letter-spacing:0.151px;">2016-10-14...</div>
<div class="t" style="left:391.40px;top:303.69px;font-size:11px;line-height:13px;color:#ececec;letter-spacing:-0.454px;">admin</div>
<div class="t" style="left:491.50px;top:303.69px;font-size:11px;line-height:13px;color:#ececec;letter-spacing:-0.070px;">administrators</div>
<div class="t" style="left:591.40px;top:303.69px;font-size:11px;line-height:13px;color:#ececec;max-width:29px;overflow:hidden;">-rwxr-</div>
<div class="t" style="left:68.80px;top:320.69px;font-size:11px;line-height:13px;color:#000;letter-spacing:-0.232px;">pass.sh</div>
<div class="t" style="left:234.00px;top:320.69px;font-size:11px;line-height:13px;color:#000;">1</div>
<div class="t" style="left:307.60px;top:320.69px;font-size:11px;line-height:13px;color:#000;letter-spacing:0.151px;">2016-10-25...</div>
<div class="t" style="left:391.40px;top:320.69px;font-size:11px;line-height:13px;color:#000;letter-spacing:-0.454px;">admin</div>
<div class="t" style="left:491.50px;top:320.69px;font-size:11px;line-height:13px;color:#000;letter-spacing:-0.070px;">administrators</div>
<div class="t" style="left:591.40px;top:320.69px;font-size:11px;line-height:13px;color:#000;max-width:29px;overflow:hidden;">-rwxr-</div>
<div class="t" style="left:68.80px;top:337.69px;font-size:11px;line-height:13px;color:#ececec;letter-spacing:0.141px;">port.php</div>
<div class="t" style="left:234.00px;top:337.69px;font-size:11px;line-height:13px;color:#ececec;">1</div>
<div class="t" style="left:307.60px;top:337.69px;font-size:11px;line-height:13px;color:#ececec;letter-spacing:0.213px;">2016-11-09...</div>
<div class="t" style="left:391.40px;top:337.69px;font-size:11px;line-height:13px;color:#ececec;letter-spacing:-0.454px;">admin</div>
<div class="t" style="left:491.50px;top:337.69px;font-size:11px;line-height:13px;color:#ececec;letter-spacing:-0.070px;">administrators</div>
<div class="t" style="left:591.40px;top:337.69px;font-size:11px;line-height:13px;color:#ececec;max-width:29px;overflow:hidden;">-rwxr-</div>
<div class="t" style="left:68.80px;top:354.69px;font-size:11px;line-height:13px;color:#ececec;letter-spacing:-0.076px;">style.css</div>
<div class="t" style="left:234.00px;top:354.69px;font-size:11px;line-height:13px;color:#ececec;">2</div>
<div class="t" style="left:307.60px;top:354.69px;font-size:11px;line-height:13px;color:#ececec;letter-spacing:0.151px;">2014-07-02...</div>
<div class="t" style="left:391.40px;top:354.69px;font-size:11px;line-height:13px;color:#ececec;letter-spacing:-0.454px;">admin</div>
<div class="t" style="left:491.50px;top:354.69px;font-size:11px;line-height:13px;color:#ececec;letter-spacing:-0.070px;">administrators</div>
<div class="t" style="left:591.40px;top:354.69px;font-size:11px;line-height:13px;color:#ececec;max-width:29px;overflow:hidden;">-rwxr-</div>
<div class="t" style="left:652.60px;top:2.07px;font-size:12.5px;line-height:15px;color:#ececec;letter-spacing:-0.347px;">MobaTextEditor</div>
<div class="t" style="left:632.00px;top:27.14px;font-size:12px;line-height:14px;color:#e4e4e4;letter-spacing:-0.336px;">File</div>
<div class="t" style="left:673.00px;top:27.14px;font-size:12px;line-height:14px;color:#e4e4e4;letter-spacing:-0.172px;">Edit</div>
<div class="t" style="left:715.80px;top:27.14px;font-size:12px;line-height:14px;color:#e4e4e4;letter-spacing:-0.472px;">Search</div>
<div class="t" style="left:773.70px;top:27.14px;font-size:12px;line-height:14px;color:#e4e4e4;letter-spacing:-0.124px;">View</div>
<div class="t" style="left:822.00px;top:27.14px;font-size:12px;line-height:14px;color:#e4e4e4;letter-spacing:-0.036px;">Format</div>
<div class="t" style="left:880.00px;top:27.14px;font-size:12px;line-height:14px;color:#e4e4e4;letter-spacing:-0.018px;">Encoding</div>
<div class="t" style="left:947.00px;top:27.14px;font-size:12px;line-height:14px;color:#e4e4e4;letter-spacing:-0.448px;">Syntax</div>
<div class="t" style="left:1004.80px;top:27.14px;font-size:12px;line-height:14px;color:#e4e4e4;letter-spacing:-0.254px;">Special Tools</div>
<div class="t" style="left:661.50px;top:86.29px;font-size:11px;line-height:13px;color:#e4e4e4;letter-spacing:-0.082px;">pass.php</div>
<div class="t" style="left:799.40px;top:85.39px;font-size:11px;line-height:13px;color:#e4e4e4;letter-spacing:-0.146px;">pass.sh</div>
<div class="t" style="left:637.59px;top:102.22px;font-size:11.5px;line-height:14px;color:#d8d8d8;">1</div>
<div class="t" style="left:637.59px;top:120.22px;font-size:11.5px;line-height:14px;color:#d8d8d8;">2</div>
<div class="t" style="left:637.59px;top:138.22px;font-size:11.5px;line-height:14px;color:#d8d8d8;">3</div>
<div class="t" style="left:637.59px;top:156.22px;font-size:11.5px;line-height:14px;color:#d8d8d8;">4</div>
<div class="t" style="left:637.59px;top:174.22px;font-size:11.5px;line-height:14px;color:#d8d8d8;">5</div>
<div class="t" style="left:637.59px;top:192.22px;font-size:11.5px;line-height:14px;color:#d8d8d8;">6</div>
<div class="t" style="left:637.59px;top:210.22px;font-size:11.5px;line-height:14px;color:#d8d8d8;">7</div>
<div class="t" style="left:637.59px;top:228.22px;font-size:11.5px;line-height:14px;color:#d8d8d8;">8</div>
<div class="t" style="left:637.59px;top:246.22px;font-size:11.5px;line-height:14px;color:#d8d8d8;">9</div>
<div class="t" style="left:631.20px;top:264.22px;font-size:11.5px;line-height:14px;color:#d8d8d8;">10</div>
<div class="t" style="left:632.05px;top:282.22px;font-size:11.5px;line-height:14px;color:#d8d8d8;">11</div>
<div class="t" style="left:631.20px;top:300.22px;font-size:11.5px;line-height:14px;color:#d8d8d8;">12</div>
<div class="t" style="left:631.20px;top:318.22px;font-size:11.5px;line-height:14px;color:#d8d8d8;">13</div>
<div class="t" style="left:631.20px;top:336.22px;font-size:11.5px;line-height:14px;color:#d8d8d8;">14</div>
<div class="t" style="left:631.20px;top:354.22px;font-size:11.5px;line-height:14px;color:#d8d8d8;">15</div>
<div class="t" style="left:631.20px;top:372.22px;font-size:11.5px;line-height:14px;color:#d8d8d8;">16</div>
<div class="t" style="left:631.20px;top:390.22px;font-size:11.5px;line-height:14px;color:#d8d8d8;">17</div>
<div class="t" style="left:631.20px;top:408.22px;font-size:11.5px;line-height:14px;color:#d8d8d8;">18</div>
<div class="t" style="left:631.20px;top:426.22px;font-size:11.5px;line-height:14px;color:#d8d8d8;">19</div>
<div class="t" style="left:631.20px;top:444.22px;font-size:11.5px;line-height:14px;color:#d8d8d8;">20</div>
<div class="cl" style="top:101.2px"><span class="g">#!/bin/sh</span></div>
<div class="cl" style="top:119.2px"><span class="p">CONF</span><span class="o">=/</span><span class="w">etc</span><span class="o">/</span><span class="w">config</span><span class="o">/</span><span class="w">qpkg.conf</span></div>
<div class="cl" style="top:137.2px"><span class="p">QPKG_NAME</span><span class="o">=</span><span class="s">"aMule"</span></div>
<div class="cl" style="top:155.2px"><span class="p">QPKG_DIR</span><span class="o">=</span><span class="p">$(</span><span class="o">/</span><span class="w">sbin</span><span class="o">/</span><span class="w">getcfg </span><span class="p">$QPKG_NAME</span><span class="w"> Install_Path </span><span class="o">-</span><span class="w">d </span><span class="s">""</span><span class="w"> </span><span class="o">-</span><span class="w">f </span><span class="p">$CONF</span><span class="o">)</span></div>
<div class="cl" style="top:173.2px"></div>
<div class="cl" style="top:191.2px"><span class="p">passwd</span><span class="o">=</span><span class="p">$1</span></div>
<div class="cl" style="top:209.2px"><span class="k">ps</span><span class="w"> </span><span class="o">-</span><span class="w">A </span><span class="o">|</span><span class="w"> </span><span class="k">grep</span><span class="w"> amule </span><span class="o">|</span><span class="w"> </span><span class="k">awk</span><span class="w"> </span><span class="s">'{print $1}'</span><span class="w"> </span><span class="o">|</span><span class="w"> xargs </span><span class="k">kill</span></div>
<div class="cl" style="top:227.2px"><span class="k">echo</span><span class="w"> </span><span class="p">$passwd</span><span class="w"> </span><span class="o">&gt;</span><span class="w"> </span><span class="p">$QPKG_DIR</span><span class="o">/</span><span class="w">Web</span><span class="o">/</span><span class="k">pwd</span><span class="w">.conf</span></div>
<div class="cl" style="top:245.2px"><span class="p">mm</span><span class="o">=</span><span class="p">$(echo</span><span class="w"> </span><span class="o">-</span><span class="w">n </span><span class="p">$passwd</span><span class="w"> </span><span class="o">|</span><span class="w"> md5sum </span><span class="o">|</span><span class="w"> </span><span class="k">cut</span><span class="w"> </span><span class="o">-</span><span class="w">d </span><span class="s">' '</span><span class="w"> </span><span class="o">-</span><span class="w">f </span><span class="s">1</span><span class="o">)</span></div>
<div class="cl" style="top:263.2px"><span class="k">export</span><span class="w"> </span><span class="p">LD_LIBRARY_PATH</span><span class="o">=</span><span class="p">$QPKG_DIR</span><span class="o">/</span><span class="w">aMule</span><span class="o">/</span><span class="w">lib</span></div>
<div class="cl" style="top:281.2px"><span class="w">touch </span><span class="k">pwd</span><span class="w">.conf</span></div>
<div class="cl" style="top:299.2px"><span class="k">echo</span><span class="w"> </span><span class="p">$mm</span><span class="w"> </span><span class="o">&gt;&gt;</span><span class="w"> </span><span class="k">pwd</span><span class="w">.conf</span></div>
<div class="cl" style="top:317.2px"><span class="k">sed</span><span class="w"> </span><span class="o">-</span><span class="w">i </span><span class="s">"s/39d012ef44588c977932556fa4ea0ae5/${mm}/g"</span><span class="w"> </span><span class="o">/</span><span class="w">root</span><span class="o">/</span><span class="w">.aMule</span><span class="o">/</span><span class="w">amule.conf </span><span class="o">/</span><span class="w">root</span><span class="o">/</span><span class="w">.aMule</span><span class="o">/</span><span class="w">remote.conf </span><span class="p">$QPKG_DIR</span><span class="o">/</span><span class="w">Web</span><span class="o">/</span><span class="w">pass.sh</span></div>
<div class="cl" style="top:335.2px"><span class="w">sleep </span><span class="s">3</span></div>
<div class="cl" style="top:353.2px"><span class="p">$QPKG_DIR</span><span class="o">/</span><span class="w">aMule</span><span class="o">/</span><span class="w">bin</span><span class="o">/</span><span class="w">amuled </span><span class="o">-</span><span class="p">c</span><span class="o">=/</span><span class="w">root</span><span class="o">/</span><span class="w">.aMule </span><span class="o">-</span><span class="w">f </span><span class="o">&gt;&amp;</span><span class="w"> </span><span class="o">/</span><span class="w">dev</span><span class="o">/</span><span class="w">null</span></div>
<div class="cl" style="top:371.2px"><span class="p">$QPKG_DIR</span><span class="o">/</span><span class="w">aMule</span><span class="o">/</span><span class="w">bin</span><span class="o">/</span><span class="w">amuleweb </span><span class="o">-</span><span class="p">f</span><span class="o">=/</span><span class="w">root</span><span class="o">/</span><span class="w">.aMule</span><span class="o">/</span><span class="w">remote.conf </span><span class="o">&gt;&amp;</span><span class="w"> </span><span class="o">/</span><span class="w">dev</span><span class="o">/</span><span class="w">null </span><span class="o">&amp;</span></div>
<div class="cl" style="top:389.2px"><span class="k">mv</span><span class="w"> </span><span class="p">$QPKG_DIR</span><span class="o">/</span><span class="w">Web</span><span class="o">/</span><span class="w">index.html </span><span class="p">$QPKG_DIR</span><span class="o">/</span><span class="w">Web</span><span class="o">/</span><span class="w">index.html.bak</span></div>
<div class="cl" style="top:407.2px"><span class="k">cp</span><span class="w"> </span><span class="p">$QPKG_DIR</span><span class="o">/</span><span class="w">Web</span><span class="o">/</span><span class="w">port.php </span><span class="p">$QPKG_DIR</span><span class="o">/</span><span class="w">Web</span><span class="o">/</span><span class="w">index.php</span></div>
<div class="cl" style="top:425.2px"><span class="g">#sed -i "s/WebUI\ =\ \/aMule/WebUI\ =\ \/ \nWeb_Port\ =\ 4711/g" /etc/config/qpkg.conf</span></div>
<div class="cl" style="top:443.2px"></div>
</body></html>
